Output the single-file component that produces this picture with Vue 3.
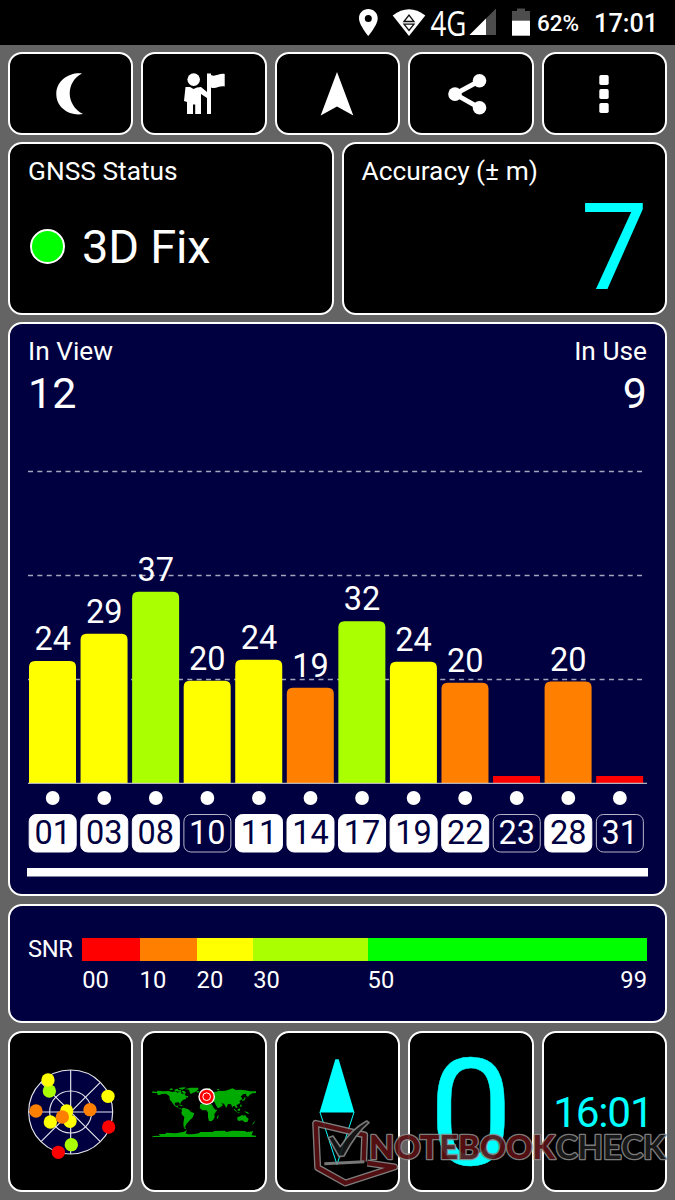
<template>
<div class="screen">
  <header class="status-bar">
    <svg class="status-icons" viewBox="0 0 175 45">
      <path fill="#fff" fill-rule="evenodd" d="M8.300 9C3 9 -1 13 -1 18.200C-1 25 8.300 36 8.300 36C8.300 36 17.700 25 17.700 18.200C17.700 13 13.600 9 8.300 9ZM8.300 15A3.500 3.500 0 1 1 8.300 22A3.500 3.500 0 1 1 8.300 15Z" />
      <path fill="#fff" d="M32.700 15.500Q49 3 65.300 15.500L49 36Z" />
      <path fill="#fff" stroke="#111" stroke-width="1.300" d="M44 21.500L49 15L54 21.500ZM44 24.200H54L49 30.500Z" />
      <text x="70.500" y="35.500" class="net" textLength="36" lengthAdjust="spacingAndGlyphs">4G</text>
      <path fill="#4d4d4d" d="M136 8.500V35H109.500Z" />
      <path fill="#fff" d="M126 18.500V35H109.500Z" />
      <path fill="#4d4d4d" d="M152 11H157V8.500H165V11H170V21H152Z" />
      <path fill="#fff" d="M152 20.700H170V35.700H152Z" />
    </svg>
    <span class="battery">62%</span>
    <span class="clock">17:01</span>
  </header>

  <main class="board">
    <button class="card tool">
      <svg viewBox="0 0 48 48"><path d="M35 3.500C23 2 9.300 10 9.300 24C9.300 38 23 46.500 36 44C18.500 35 18.500 12 35 3.500Z" /></svg>
    </button>
    <button class="card tool">
      <svg viewBox="0 0 48 48">
        <circle cx="13.700" cy="9.600" r="6.300" />
        <path d="M5.500 17L10 17L13.500 19L17 17.500L21 17L27 22V3.500H31V5C35 7.500 39 3 44.700 4V16.500C39 15.500 36 19.500 31 17.500V44H27V28L21 24V44H15.200V34.500H13V44H7V32L4 31Z" />
      </svg>
    </button>
    <button class="card tool">
      <svg viewBox="0 0 48 48"><path d="M24 2L40.300 45.500L24 36.500L7.700 45.500Z" /></svg>
    </button>
    <button class="card tool">
      <svg viewBox="0 0 48 48">
        <path d="M32.500 10.800L8 24.100L32.500 37.800" fill="none" stroke="#fff" stroke-width="4.800" />
        <circle cx="32.500" cy="10.800" r="6.800" />
        <circle cx="8" cy="24.100" r="6.800" />
        <circle cx="32.500" cy="37.800" r="6.800" />
      </svg>
    </button>
    <button class="card tool">
      <svg viewBox="0 0 48 48">
        <rect v-for="y in [5, 19, 33]" x="19.300" :y="y" width="9.400" height="9.900" rx="1.700" />
      </svg>
    </button>

    <section class="card info fix">
      <div class="label">GNSS Status</div>
      <div class="fix-row"><i class="led"></i>3D Fix</div>
    </section>
    <section class="card info accuracy">
      <div class="label">Accuracy (± m)</div>
      <div class="big">7</div>
    </section>

    <section class="card navy signals">
      <div class="counts">
        <div><div class="label">In View</div><div class="count">{{ sats.length }}</div></div>
        <div class="right"><div class="label">In Use</div><div class="count">{{ inUse }}</div></div>
      </div>
      <svg class="chart" viewBox="0 0 621 440" width="621" height="440">
        <line v-for="y in [31.500, 135.500, 239.500]" x1="1" x2="616" :y1="y" :y2="y" class="grid-line" />
        <g v-for="(s, i) in sats" :transform="`translate(${barX(i)} 0)`">
          <path :d="barPath(s)" :fill="s.color" />
          <text v-if="s.snr" x="23.700" :y="base - s.snr * scale - 11">{{ Math.ceil(s.snr) }}</text>
          <circle cx="23.700" cy="358" r="6.900" fill="#fff" />
          <rect x="0.200" y="374.500" width="47" height="37.500" rx="7" :class="s.used ? 'used' : 'unused'" />
          <text x="23.700" y="404" :class="{ dark: s.used }">{{ s.prn }}</text>
        </g>
        <rect x="1" y="342.800" width="619" height="1" fill="#ddd" />
        <rect x="0" y="428" width="621" height="8.500" fill="#fff" />
      </svg>
    </section>

    <section class="card navy snr">
      <div class="snr-label">SNR</div>
      <div class="ramp">
        <div v-for="r in ramp" class="step" :style="{ flexGrow: r.size }">
          <div class="swatch" :style="{ background: r.color }"></div>
          <div class="ticks"><span>{{ r.from }}</span><span v-if="r.to">{{ r.to }}</span></div>
        </div>
      </div>
    </section>

    <section class="card tile">
      <svg viewBox="71 133 282 282" width="94" height="94">
        <g fill="none" stroke="#e4e4ec" stroke-width="3.500">
          <circle cx="211" cy="274" r="126" fill="#000040" />
          <circle cx="211" cy="274" r="63" />
          <path d="M211 148V400M85 274H337M122 185L300 363M300 185L122 363" />
        </g>
        <circle v-for="p in sky" :cx="p[0]" :cy="p[1]" r="20" :fill="p[2]" />
      </svg>
    </section>
    <section class="card tile">
      <svg viewBox="50 198 315 155" width="105" height="51.700">
        <g fill="#00aa00">
          <path d="M51 214L64 216L66 212L84 214L99 213L112 216L120 214L127 218L137 213L139 222L147 220L151 227L159 229L157 233L151 232L153 236L144 239L137 246L135 253L130 247L119 248L118 254L123 258L129 256L127 262L134 265L139 266L136 268L125 262L117 257L110 247L104 240L102 228L92 221L80 222L70 226L65 222L66 219L51 219Z" />
          <path d="M102 207L110 205L113 209L105 211ZM117 209L127 206L129 210L138 211L133 215L119 213ZM129 204L145 202L153 203L141 209L134 208ZM139 212L147 213L153 219L148 221L140 216Z" />
          <path d="M153 206L166 203L189 203L189 208L185 212L180 216L171 219L167 223L163 217L161 209L151 208Z" />
          <path d="M128 254L136 254L143 258L139 259ZM138 267L144 263L155 266L162 270L166 275L177 280L174 287L171 294L164 300L159 306L155 310L150 318L151 323L145 321L144 310L147 291L140 284L138 278L140 272Z" />
          <path d="M195 252L205 249L214 250L216 253L229 253L235 263L240 269L246 269L240 278L237 283L238 291L234 299L228 304L221 303L218 292L218 278L214 271L201 271L193 264Z" />
          <path d="M246 288L250 286L248 295L244 297ZM184 214L192 213L191 217L185 218ZM197 226L202 224L204 231L198 234ZM218 205L225 204L224 208ZM245 208L253 206L247 212Z" />
          <path d="M207 222L214 214L225 212L232 216L243 215L251 212L260 213L270 212L280 209L291 205L302 210L315 209L330 211L345 214L362 214L362 219L351 220L343 224L338 231L333 227L332 221L323 223L316 230L321 234L318 240L312 243L315 248L309 253L303 255L307 262L302 264L297 257L293 259L292 264L287 253L278 252L273 264L269 257L266 251L257 250L263 255L256 261L248 265L241 254L238 247L229 244L221 243L213 239L207 243L197 245L196 240L202 237L204 232L210 229Z" />
          <path d="M320 239L326 237L328 231L331 233L328 241L321 243ZM297 266L304 273L304 277L295 268ZM308 267L315 265L313 273L307 272ZM305 277L315 278L308 280ZM326 274L337 276L342 282L334 280ZM306 292L314 289L320 285L326 287L329 284L333 290L340 297L336 306L328 307L321 301L310 303L306 299ZM353 309L359 303L357 309L350 315ZM314 255L318 253L319 262L315 260Z" />
          <path d="M145 322L153 325L149 328ZM146 335L155 330L151 340L158 343L172 343L191 340L195 336L232 336L237 333L269 332L272 336L291 332L330 333L333 336L354 334L351 339L349 346L362 347L362 352L52 352L52 348L75 347L70 342L91 342L91 338L122 340Z" />
        </g>
        <circle cx="214" cy="230" r="25" fill="#fff" />
        <circle cx="214" cy="230" r="21" fill="#f00" />
        <circle cx="214" cy="230" r="11.500" fill="#f00" stroke="#fff" stroke-width="3" />
      </svg>
    </section>
    <section class="card tile">
      <svg viewBox="0 0 38 108" width="38" height="108">
        <path d="M17.300 1.300H20.700L36.300 54H1.700Z" fill="#0ff" />
        <path d="M1.900 54L19 106.500L36.100 54Z" fill="none" stroke="#0ff" />
      </svg>
    </section>
    <section class="card tile speed">0</section>
    <section class="card tile time">16:01</section>
  </main>

  <!-- watermark lies over the bottom row -->
  <svg class="watermark" viewBox="120 295 1080 215" width="360" height="71.700">
    <g stroke-linejoin="round" fill="none">
      <path d="M281 425L284 346L137 311L143 444L226 490L374 442L292 430" stroke="#8c8c8c" stroke-width="21" />
      <path d="M281 425L284 346L137 311L143 444L226 490L374 442L292 430" stroke="#5c1013" stroke-width="13" />
      <path d="M163 432L283 426" stroke="#858585" stroke-width="9" />
      <path d="M175 354L189 349L211 381C235 343 260 320 290 304L297 309C264 336 244 367 222 409L207 411Z" fill="#171717" stroke="#858585" stroke-width="5" />
    </g>
    <text x="297" y="417" class="brand" textLength="558" lengthAdjust="spacingAndGlyphs">NOTEBOOK</text>
    <text x="857" y="417" class="brand check" textLength="330" lengthAdjust="spacingAndGlyphs">CHECK</text>
  </svg>
</div>
</template>

<script setup>
const RED = '#ff0000'
const ORANGE = '#ff8000'
const YELLOW = '#ffff00'
const LIME = '#aaff00'

const base = 343
const scale = 5.2

const sats = [
  { prn: '01', snr: 23.45, color: YELLOW, used: true },
  { prn: '03', snr: 28.7, color: YELLOW, used: true },
  { prn: '08', snr: 36.8, color: LIME, used: true },
  { prn: '10', snr: 19.65, color: YELLOW, used: false },
  { prn: '11', snr: 23.7, color: YELLOW, used: true },
  { prn: '14', snr: 18.3, color: ORANGE, used: true },
  { prn: '17', snr: 31.1, color: LIME, used: true },
  { prn: '19', snr: 23.3, color: YELLOW, used: true },
  { prn: '22', snr: 19.3, color: ORANGE, used: true },
  { prn: '23', snr: 0, color: RED, used: false },
  { prn: '28', snr: 19.5, color: ORANGE, used: true },
  { prn: '31', snr: 0, color: RED, used: false }
]
const inUse = sats.filter(s => s.used).length

const ramp = [
  { from: '00', size: 57.3, color: RED },
  { from: '10', size: 57, color: ORANGE },
  { from: '20', size: 56.7, color: YELLOW },
  { from: '30', size: 114.3, color: LIME },
  { from: '50', to: '99', size: 279.4, color: '#00ff00' }
]

const sky = [
  [147, 211, LIME], [143, 178, YELLOW], [323, 227, YELLOW],
  [107, 271, ORANGE], [150, 304, YELLOW], [199, 271, YELLOW],
  [209, 302, YELLOW], [186, 289, ORANGE], [269, 267, ORANGE],
  [325, 319, RED], [213, 372, LIME], [174, 395, RED]
]

function barX(i) {
  return 2 + i * 51.56
}

// rounded top corners only, empty channels get a flat stub
function barPath(s) {
  if (!s.snr) return `M0 ${base}v-7h47v7Z`
  const h = s.snr * scale
  return `M0 ${base}v${6 - h}q0 -6 6 -6h35q6 0 6 6v${h - 6}Z`
}
</script>

<style>
  body {
    background: #646464;
  }
</style>

<style scoped>
  .screen {
    position: relative;
    box-sizing: border-box;
    width: 675px;
    height: 1200px;
    overflow: hidden;
    background: #646464;
    color: #fff;
    font-family: Roboto, "Liberation Sans", sans-serif;
  }

  .status-bar {
    display: flex;
    align-items: center;
    height: 45px;
    padding-left: 360px;
    background: #000;
    font-weight: 500;
    white-space: nowrap;
  }

  .status-icons {
    flex: none;
    width: 175px;
    height: 45px;
    overflow: visible;
  }

  .net {
    font: 35px "Open Sans", "Noto Sans", sans-serif;
    fill: #fff;
  }

  .battery {
    width: 59px;
    padding-left: 2px;
    box-sizing: border-box;
    font-size: 22.5px;
  }

  .clock {
    font-size: 25.3px;
    padding-top: 2px;
  }

  .board {
    display: grid;
    grid-template-columns: repeat(10, 1fr);
    grid-template-rows: 82.3px 172.3px 574.2px 119.2px 161.6px;
    gap: 7.6px 8px;
    padding: 7.4px 8px 0;
  }

  .card {
    grid-column: span 2;
    box-sizing: border-box;
    min-width: 0;
    border: 2px solid #fff;
    border-radius: 14px;
    background: #000;
    color: #fff;
  }

  .tool {
    display: flex;
    align-items: center;
    justify-content: center;
    padding: 0;
  }

  .tool svg {
    width: 48px;
    height: 48px;
    fill: #fff;
  }

  .info {
    grid-column: span 5;
    padding: 12px 18px 0;
  }

  .label {
    font-size: 26.3px;
    line-height: 30px;
  }

  .fix-row {
    display: flex;
    align-items: center;
    gap: 17px;
    margin-top: 36px;
    padding-left: 2px;
    font-size: 47px;
    letter-spacing: -0.2px;
    line-height: 50px;
  }

  .led {
    width: 31px;
    height: 31px;
    margin-top: -2px;
    border: 2px solid #fff;
    border-radius: 50%;
    background: #0f0;
  }

  .big {
    margin: 2px -1px 0 0;
    color: #0ff;
    font-size: 120px;
    line-height: 120px;
    text-align: right;
  }

  .navy {
    grid-column: span 10;
    background: #000040;
  }

  .signals {
    padding: 12px 17px 0;
  }

  .counts {
    display: flex;
    justify-content: space-between;
    height: 104px;
    padding: 0 1px;
  }

  .right {
    text-align: right;
  }

  .count {
    margin-top: 4px;
    font-size: 43px;
    line-height: 46px;
  }

  .chart {
    display: block;
    font-size: 32.5px;
    text-anchor: middle;
    fill: #fff;
  }

  .grid-line {
    stroke: #a5a5bd;
    stroke-width: 1.3;
    stroke-dasharray: 5 4.37;
  }

  .used {
    fill: #fff;
    stroke: #fff;
  }

  .unused {
    fill: none;
    stroke: #b5b5c8;
  }

  .dark {
    fill: #000040;
  }

  .snr {
    display: flex;
    padding: 32px 18px 0;
    font-size: 23.7px;
  }

  .snr-label {
    width: 54.3px;
    line-height: 22px;
    letter-spacing: -0.4px;
  }

  .ramp {
    flex: 1;
    display: flex;
  }

  .step {
    flex: 0 0 0;
    min-width: 0;
  }

  .swatch {
    height: 23px;
  }

  .ticks {
    display: flex;
    justify-content: space-between;
    margin-top: 5px;
    line-height: 28px;
  }

  .tile {
    display: flex;
    align-items: center;
    justify-content: center;
    color: #0ff;
  }

  .speed {
    padding-top: 6px;
    font-size: 149px;
    line-height: 149px;
    -webkit-text-stroke: 0.5px #0ff;
  }

  .time {
    padding: 3px 3px 0 0;
    font-size: 42.3px;
    letter-spacing: -1.2px;
    line-height: 42px;
  }

  .watermark {
    position: absolute;
    left: 310px;
    top: 1118.300px;
    opacity: 0.9;
  }

  .brand {
    font: 900 98px Lato, sans-serif;
    fill: #5c1013;
    stroke: #8a8a8a;
    stroke-width: 8;
    paint-order: stroke;
    stroke-linejoin: round;
  }

  .check {
    font-weight: 700;
    fill: #1b1b1b;
  }
</style>
